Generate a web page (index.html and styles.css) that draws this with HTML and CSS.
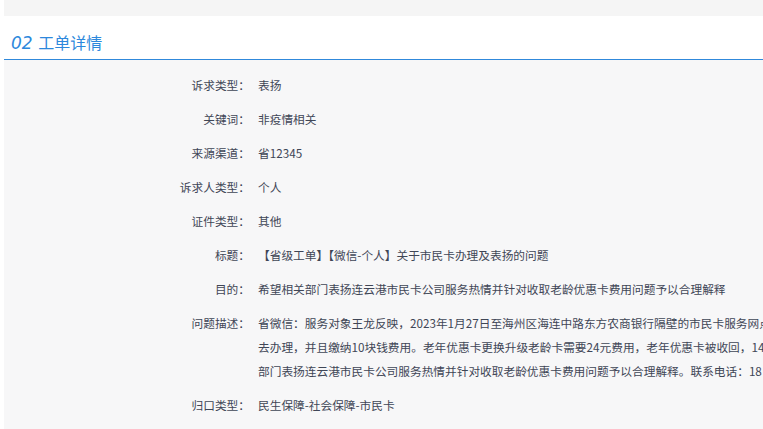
FILE: index.html
```html
<!DOCTYPE html>
<html lang="zh-CN">
<head>
  <meta charset="UTF-8" />
  <meta name="viewport" content="width=device-width, initial-scale=1.0" />
  <title>工单详情</title>
  <link rel="stylesheet" href="styles.css">
</head>
<body>
  <div class="page">
    <div class="top-band"></div>

    <div class="section-head">
      <span class="section-no">02</span>
      <span class="section-title">工单详情</span>
    </div>

    <div class="detail">
      <div class="row">
        <div class="row-label">诉求类型：</div>
        <div class="row-value">表扬</div>
      </div>
      <div class="row">
        <div class="row-label">关键词：</div>
        <div class="row-value">非疫情相关</div>
      </div>
      <div class="row">
        <div class="row-label">来源渠道：</div>
        <div class="row-value">省12345</div>
      </div>
      <div class="row">
        <div class="row-label">诉求人类型：</div>
        <div class="row-value">个人</div>
      </div>
      <div class="row">
        <div class="row-label">证件类型：</div>
        <div class="row-value">其他</div>
      </div>
      <div class="row">
        <div class="row-label">标题：</div>
        <div class="row-value">【省级工单】【微信-个人】关于市民卡办理及表扬的问题</div>
      </div>
      <div class="row">
        <div class="row-label">目的：</div>
        <div class="row-value">希望相关部门表扬连云港市民卡公司服务热情并针对收取老龄优惠卡费用问题予以合理解释</div>
      </div>
      <div class="row">
        <div class="row-label">问题描述：</div>
        <div class="row-value">省微信：服务对象王龙反映，2023年1月27日至海州区海连中路东方农商银行隔壁的市民卡服务网点办理老龄卡，工作人员让其<br>去办理，并且缴纳10块钱费用。老年优惠卡更换升级老龄卡需要24元费用，老年优惠卡被收回，14元费用未退还。希望相关<br>部门表扬连云港市民卡公司服务热情并针对收取老龄优惠卡费用问题予以合理解释。联系电话：18</div>
      </div>
      <div class="row">
        <div class="row-label">归口类型：</div>
        <div class="row-value">民生保障-社会保障-市民卡</div>
      </div>
    </div>
  </div>
</body>
</html>
```

FILE: styles.css
```css
html, body {
  margin: 0;
  overflow: hidden;
}
body {
  font-family: "Noto Sans CJK SC", "Noto Sans", sans-serif;
  font-size: 11.7px;
  color: #3f4656;
  background-color: #fff;
}
.page {
  margin-left: 4px;
  width: 1300px;
}
.top-band {
  height: 16px;
  background-color: #f5f5f5;
}
.section-head {
  padding: 14px 0 3px 7px;
  line-height: 24px;
  background-color: #fff;
  border-bottom: 1px solid #3089db;
  color: #2d88dc;
}
.section-no {
  font-size: 17px;
  font-style: italic;
  font-family: "DejaVu Sans", sans-serif;
  font-weight: 300;
  margin-right: 3px;
}
.section-title {
  font-size: 16px;
}
.detail {
  background-color: #f7f7f8;
  padding: 8px 0 40px;
  min-height: 400px;
}
.row {
  display: flex;
  padding: 5px 0;
  line-height: 24px;
}
.row-label {
  width: 246px;
  flex: none;
  text-align: right;
}
.row-value {
  margin-left: 8px;
  white-space: nowrap;
}
```
